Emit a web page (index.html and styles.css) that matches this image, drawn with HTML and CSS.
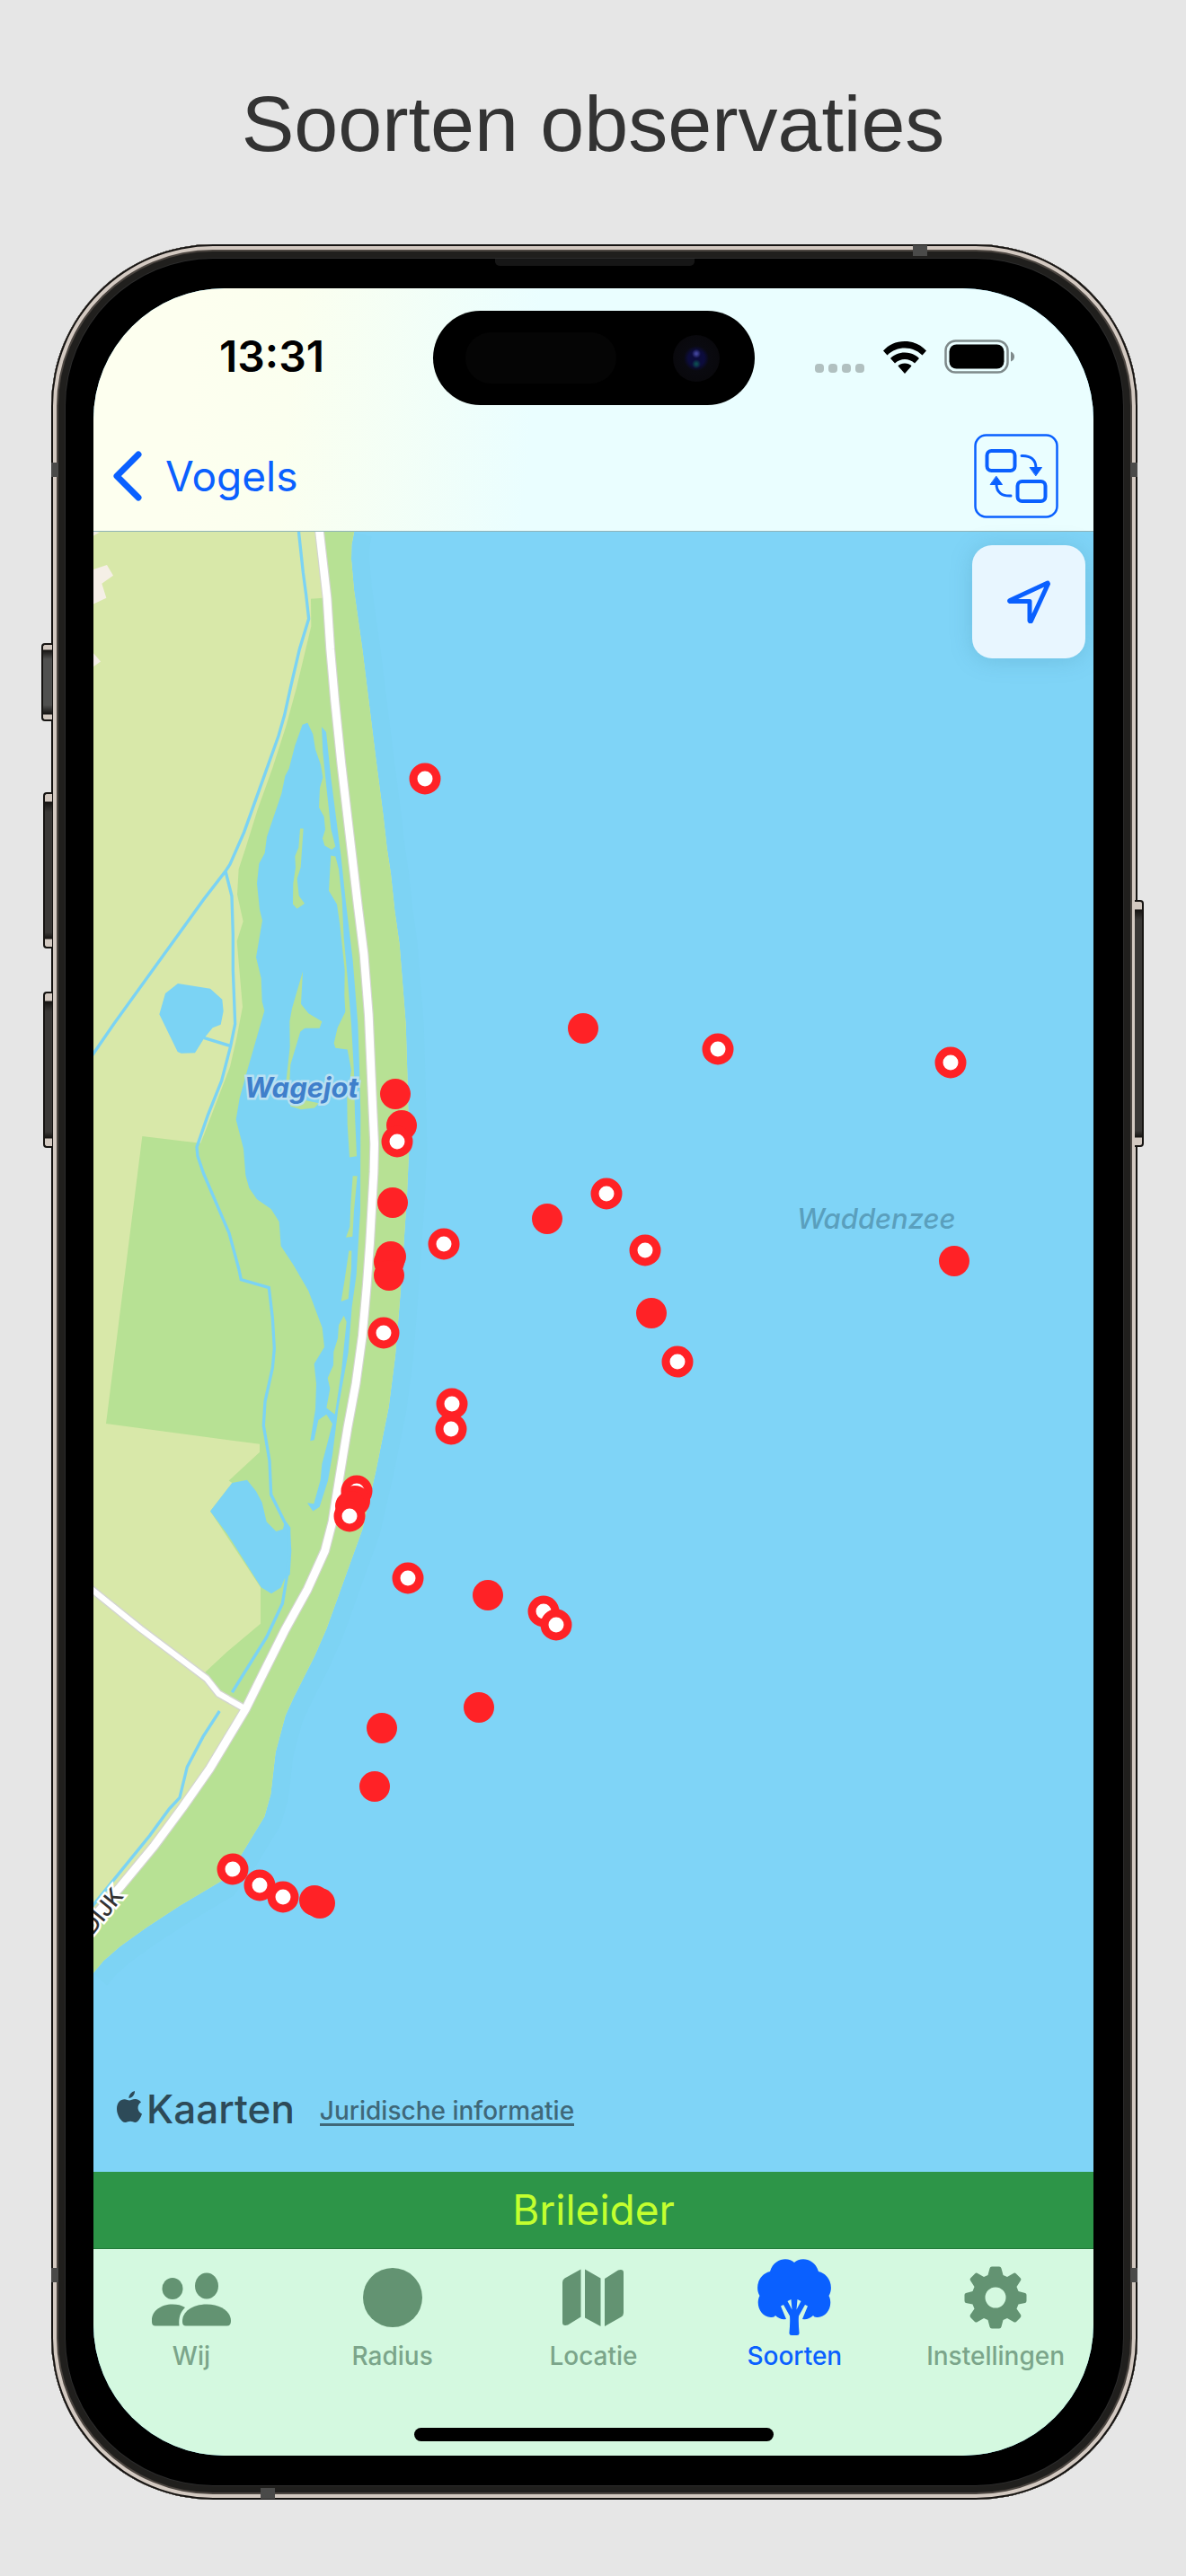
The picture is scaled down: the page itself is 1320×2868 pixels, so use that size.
FILE: index.html
```html
<!DOCTYPE html>
<html lang="nl">
<head>
<meta charset="utf-8">
<meta name="viewport" content="width=device-width, initial-scale=1">
<title>Soorten observaties</title>
<link rel="stylesheet" href="styles.css">
</head>
<body>
<h1 class="title">Soorten observaties</h1>
<main class="stage">
  <div class="phone">
    <span class="key key-action"></span>
    <span class="key key-up"></span>
    <span class="key key-down"></span>
    <span class="key key-power"></span>
    <span class="band band-left-top"></span>
    <span class="band band-left-bottom"></span>
    <span class="band band-right-top"></span>
    <span class="band band-right-bottom"></span>
    <span class="band band-top"></span>
    <span class="band band-bottom"></span>
    <span class="earpiece"></span>
    <div class="screen">
      <div class="island"><span class="sensor"></span><span class="camera"></span></div>
      <header class="header">
        <div class="status">
          <time class="clock">13:31</time>
          <div class="indicators">
            <svg class="dots" viewBox="0 0 56 12" aria-hidden="true"><rect width="10" height="10" y="1" rx="4"/><rect width="10" height="10" x="15" y="1" rx="4"/><rect width="10" height="10" x="30" y="1" rx="4"/><rect width="10" height="10" x="45" y="1" rx="4"/></svg>
            <svg class="wifi" viewBox="0 0 48 36" aria-hidden="true"><path d="M24 0C34 0 42 4 48 10.500L43.500 15.500C38 10 31 7.500 24 7.500S10 10 4.500 15.500L0 10.500C6 4 14 0 24 0Z"/><path d="M24 12.500C30.500 12.500 36 15 40 19L35 24.500C32 21.500 28 20 24 20S16 21.500 13 24.500L8 19C12 15 17.500 12.500 24 12.500Z"/><path d="M24 24.500C27 24.500 30 25.700 31.500 27.500L24 36L16.500 27.500C18 25.700 21 24.500 24 24.500Z"/></svg>
            <svg class="battery" viewBox="0 0 79 38" aria-hidden="true"><rect x="1.500" y="1.500" width="69" height="35" rx="11" fill="none" stroke="#7f8a8b" stroke-width="2.500"/><rect x="5.500" y="5.500" width="61" height="27" rx="8"/><path d="M74 13.500Q78 15 78 19T74 24.500Z" fill="#7f8a8b"/></svg>
          </div>
        </div>
        <nav class="navbar" aria-label="Navigatie">
          <a class="back" href="#vogels">
            <svg class="chevron" viewBox="0 0 32 56" aria-hidden="true"><path d="M28 4L4 28L28 52"/></svg>
            Vogels
          </a>
          <button class="swap" type="button" aria-label="Wissel weergave">
            <svg viewBox="0 0 94 94" aria-hidden="true"><rect x="1.500" y="1.500" width="91" height="91" rx="12" stroke-width="2.500"/><rect x="14.500" y="19" width="31" height="22" rx="5"/><rect x="48.500" y="53" width="31" height="22" rx="5"/><path d="M53 24.500C63 24 69 29 69 38" stroke-width="3"/><path d="M41 69C31 69.500 25 65 25 56" stroke-width="3"/><path class="solid" d="M62.500 37.500H75.500L69 46.500ZM18.500 56.500H31.500L25 47.500Z" stroke-width="1"/></svg>
          </button>
        </nav>
      </header>
      <section class="map" aria-label="Kaart">
        <svg class="chart" viewBox="104 592 1113 1826" role="img" aria-label="Waarnemingen bij Wagejot en de Waddenzee">
          <rect class="sea" x="104" y="592" width="1113" height="1826"/>
          <g transform="translate(90 580) scale(.33333 .35714)">
            <path class="shallow" d="M912 36L904 75L903 120L912 215L940 400L985 740L1010 920L1022 1020L1035 1100L1048 1215L1064 1320L1085 1568L1090 1720L1096 1950L1089 2100L1075 2300L1066 2420L1050 2602L1028 2762L985 2962L940 3144L905 3234L820 3454L780 3539L710 3669L683 3724L650 3839L634 3969L613 4039L535 4159L470 4239L330 4317L220 4384L130 4444L75 4489L42 4526"/>
            <path class="field" d="M0 0H920L904 75L903 120L912 215L940 400L985 740L1010 920L1022 1020L1035 1100L1048 1215L1064 1320L1085 1568L1090 1720L1096 1950L1089 2100L1075 2300L1066 2420L1050 2602L1028 2762L985 2962L940 3144L905 3234L820 3454L780 3539L710 3669L683 3724L650 3839L634 3969L613 4039L535 4159L470 4239L330 4317L220 4384L130 4444L75 4489L42 4526L0 4550Z"/>
            <path class="meadow" d="M800 30H913L904 75L903 120L912 215L940 400L985 740L1010 920L1022 1020L1035 1100L1048 1215L1064 1320L1085 1568L1090 1720L1096 1950L1089 2100L1075 2300L1066 2420L1050 2602L1028 2762L985 2962L940 3144L905 3234L820 3454L780 3539L710 3669L683 3724L650 3839L634 3969L613 4039L535 4159L470 4239L330 4317L220 4384L130 4444L75 4489L42 4526L0 4550V4400L130 4260L245 4130L340 4010L430 3890L550 3704L460 3656L415 3589L490 3524L600 3438V3324L432 3087L505 2999L494 2992L597 2903V2878L84 2814L205 1918L400 1940L498 1702L520 1612L540 1515L532 1430L521 1310L542 1248L522 1165L527 1085L550 1020L590 900L640 770L685 640L720 520L769 328L768 243L808 240Z"/>
            <path class="built" d="M30 155L87 137L108 170L70 195L85 240L30 264ZM30 400L42 412L66 438L42 454L30 460ZM30 30L62 36L42 46Z"/>
            <path class="lake" d="M324 1442L432 1458L472 1492L476 1528L467 1570L440 1580L412 1612L381 1658L335 1660L323 1655L262 1538L282 1473Z"/>
            <path class="lake" d="M757 629L775 665L783 712L801 760L808 800L798 832L795 893L812 922L816 962L807 990L814 1012L838 1025L850 1015L835 960L820 830L808 720L804 642L819 658L835 800L868 1040L885 1190L908 1370L925 1568L930 1700L934 1850L933 2150L920 2350L905 2450L893 2592L860 2762L840 2912L825 2992L797 3074L775 3087L756 3061L778 3064L800 2990L805 2940L840 2815L820 2785L793 2803L779 2865L766 2868L783 2770L786 2690L779 2628L813 2575L806 2515L760 2400L710 2320L668 2260L662 2185L635 2145L588 2115L562 2080L550 2040L543 1957L518 1866L530 1800L555 1715L613 1527L605 1498L602 1425L585 1360L606 1245L597 1212L588 1130L595 1068L614 1035L621 985L670 850L682 795L695 772L715 700L740 635Z"/>
            <path class="lake" d="M505 2999L555 2990L585 3025L605 3060L620 3120L652 3150L675 3143L680 3120L698 3140L703 3210L698 3285L680 3298L668 3325L636 3344L602 3324L490 3160L432 3087Z"/>
            <path class="meadow" d="M732 959H743L734 1080L722 1115L728 1168L747 1193L722 1209L708 1195L709 1130L717 1080L715 1045L727 1018ZM835 1043L850 1046L861 1085L872 1180L878 1300L890 1420L903 1568L912 1720L915 1850L921 1980L897 1984L890 1880L889 1800L903 1712L890 1648L850 1643L845 1628L857 1580L883 1530L880 1480L881 1400L865 1260L855 1195L828 1153L832 1085ZM741 1404L735 1506L760 1535L805 1560L797 1581H748L733 1592L700 1695L695 1780L700 1815L745 1805L795 1815L780 1830L735 1835L700 1825L685 1750L698 1640L697 1560L705 1520ZM908 2042H923L912 2150L907 2231L885 2234L898 2200L901 2130ZM895 2275H904L903 2330L893 2425L869 2433L880 2370ZM878 2477L887 2497L870 2650L853 2755L848 2785L820 2765L832 2705L824 2672L843 2632L844 2590L858 2548L861 2507Z"/>
            <path class="creek" d="M727 30L742 160L752 230L761 305L730 400L700 520L680 605L660 670L595 840L545 970L498 1070L483 1092L410 1180L110 1568L30 1677M483 1092L504 1170L508 1290L508 1400L515 1568L500 1637L470 1745L425 1850L387 1952L390 1980L410 2035L495 2220L527 2330L535 2365L628 2390L640 2485L646 2580L640 2640L615 2745L610 2820L630 2930L635 3035L680 3120L695 3140V3215L688 3290L673 3375L620 3480L505 3652M463 3710L408 3790L355 3884L330 3980L295 4015L230 4098L30 4328M410 1611L500 1637"/>
            <path class="lane-edge" d="M30 3326L200 3454L420 3609L460 3656L550 3704"/>
            <path class="road-edge" d="M795 20L822 240L833 400L848 560L870 760L900 1000L925 1200L945 1350L961 1540L975 1842L980 1942L978 2030L965 2250L955 2380L940 2540L918 2690L890 2830L862 2990L850 3060L840 3120L815 3210L757 3330L680 3460L605 3600L550 3704L430 3890L340 4010L245 4130L130 4260L30 4365"/>
            <path class="lane" d="M30 3326L200 3454L420 3609L460 3656L550 3704"/>
            <path class="road" d="M795 20L822 240L833 400L848 560L870 760L900 1000L925 1200L945 1350L961 1540L975 1842L980 1942L978 2030L965 2250L955 2380L940 2540L918 2690L890 2830L862 2990L850 3060L840 3120L815 3210L757 3330L680 3460L605 3600L550 3704L430 3890L340 4010L245 4130L130 4260L30 4365"/>
          </g>
          <text class="place" x="272" y="1222">Wagejot</text>
          <text class="water-name" x="887" y="1368">Waddenzee</text>
          <text class="street" transform="translate(103 2155) rotate(-51)">DIJK</text>
          <g class="dot">
            <circle cx="649" cy="1145" r="17"/><circle cx="440" cy="1218" r="17"/><circle cx="447" cy="1253" r="17"/><circle cx="437" cy="1339" r="17"/><circle cx="435" cy="1399" r="17"/><circle cx="433" cy="1405" r="17"/><circle cx="433" cy="1420" r="17"/><circle cx="609" cy="1357" r="17"/><circle cx="1062" cy="1404" r="17"/><circle cx="725" cy="1462" r="17"/><circle cx="543" cy="1776" r="17"/><circle cx="533" cy="1901" r="17"/><circle cx="425" cy="1924" r="17"/><circle cx="417" cy="1989" r="17"/><circle cx="350" cy="2116" r="17"/><circle cx="356" cy="2119" r="17"/>
          </g>
          <g class="ring">
            <circle cx="473" cy="867" r="13"/><circle cx="799" cy="1168" r="13"/><circle cx="1058" cy="1183" r="13"/><circle cx="442" cy="1271" r="13"/><circle cx="675" cy="1329" r="13"/><circle cx="494" cy="1385" r="13"/><circle cx="718" cy="1392" r="13"/><circle cx="427" cy="1484" r="13"/><circle cx="754" cy="1516" r="13"/><circle cx="503" cy="1563" r="13"/><circle cx="502" cy="1591" r="13"/><circle cx="397" cy="1660" r="13"/><circle cx="454" cy="1757" r="13"/><circle cx="605" cy="1794" r="13"/><circle cx="619" cy="1809" r="13"/><circle cx="259" cy="2081" r="13"/><circle cx="289" cy="2099" r="13"/><circle cx="315" cy="2112" r="13"/>
          </g>
          <g class="dot"><circle cx="395" cy="1671" r="17"/><circle cx="390" cy="1677" r="17"/></g>
          <g class="ring"><circle cx="389" cy="1688" r="13"/></g>
        </svg>
        <button class="locate" type="button" aria-label="Mijn locatie">
          <svg viewBox="0 0 48 48" aria-hidden="true"><path d="M45 3L3 22.500Q2 23 3 23.500H25V45Q25.500 46.500 26.500 45.500L45.500 4Z"/></svg>
        </button>
        <div class="credits">
          <span class="brand">
            <svg viewBox="0 0 28 36" aria-hidden="true"><path d="M20 0C20.300 4 17 8 13.500 8C13 4.500 16.500 .800 20 0ZM14 10.500C15.500 10.500 17.500 9 20.500 9C23 9 25.500 10.500 27 12.500C22 15.500 22.500 23 28 25.500C26.500 30 23.500 35 20.500 35C18.500 35 17.500 33.800 15 33.800S11.500 35 9.500 35C5 35 0 27 0 20C0 13 4 9.200 8.500 9.200C11 9.200 12.800 10.500 14 10.500Z"/></svg>
            Kaarten
          </span>
          <a class="legal" href="#juridisch">Juridische informatie</a>
        </div>
      </section>
      <h2 class="species">Brileider</h2>
      <footer class="footer">
        <nav class="tabs" aria-label="Tabbladen">
          <a class="tab" href="#wij">
            <svg viewBox="0 0 88 88" aria-hidden="true"><ellipse cx="23" cy="35" rx="11.500" ry="12"/><ellipse cx="61" cy="32" rx="13" ry="14.500"/><path d="M0 70C0 60 10 52.500 23 52.500C28.500 52.500 33 53.500 37 56C32 61 29.500 67 30.500 76.500H4Q0 76.500 0 72Z"/><path d="M34 71C34 61 45 52.500 61 52.500S88 61 88 71Q88 76.500 83.500 76.500H38Q34 76.500 34 72Z"/></svg>
            Wij
          </a>
          <a class="tab" href="#radius">
            <svg viewBox="0 0 88 88" aria-hidden="true"><circle cx="44" cy="45" r="33"/></svg>
            Radius
          </a>
          <a class="tab" href="#locatie">
            <svg viewBox="0 0 88 88" aria-hidden="true"><path d="M10 28Q10 25 12.500 23.500L30.500 13.500V66.500L16 75.500Q10 77 10 73ZM35 13.500L52.500 23.500V77L35 67.500ZM57 24L72 14.500Q78 13 78 17V62Q78 65 75.500 66.500L57 77Z"/></svg>
            Locatie
          </a>
          <a class="tab active" href="#soorten" aria-current="page">
            <svg viewBox="0 0 88 88" aria-hidden="true"><path d="M44 6C50 0 66 0 71 16C84 19 88 34 82.500 43C88 54 80 68 69 67Q66 67 65 65Q60 70 53 69L59 54.500L56 53L49 65.500C48.500 72 49 78 49.500 84Q50 87 47 87H41Q38 87 38.500 84C39 78 39.500 72 39 65.500L32 53L29 54.500L35 69Q28 70 23 65Q22 67 19 67C8 68 0 54 5.500 43C0 34 4 19 17 16C22 0 38 0 44 6Z"/><path class="gap" d="M36.500 49L40.500 47L41.500 58.500ZM51.500 49L47.500 47L46.500 58.500Z"/></svg>
            Soorten
          </a>
          <a class="tab" href="#instellingen">
            <svg viewBox="0 0 88 88" aria-hidden="true"><path fill-rule="evenodd" d="M40 10.500H48Q50 10.500 50.500 12.500L52.500 20L57 22L64 18Q65.500 17 67 18.500L71.500 23Q73 24.500 72 26L67.500 33L69.500 38L77 40Q78.500 40.500 78.500 42V48.500Q78.500 50.500 77 51L69.500 52.500L67.500 57.500L72 64Q73 66 71.500 67.500L67 72Q65.500 73 64 72L57 68L52.500 70L50.500 77.500Q50 79.500 48 79.500H40Q38 79.500 37.500 77.500L35.500 70L31 68L24 72Q22.500 73 21 72L16.500 67.500Q15 66 16 64L20.500 57.500L18.500 52.500L11 51Q9.500 50.500 9.500 48.500V42Q9.500 40.500 11 40L18.500 38L20.500 33L16 26Q15 24.500 16.500 23L21 18.500Q22.500 17 24 18L31 22L35.500 20L37.500 12.500Q38 10.500 40 10.500ZM44 33.500A11.500 11.500 0 1 0 44 56.500A11.500 11.500 0 1 0 44 33.500Z"/></svg>
            Instellingen
          </a>
        </nav>
        <span class="home"></span>
      </footer>
    </div>
  </div>
</main>
</body>
</html>
```
FILE: styles.css
```css
* {
  box-sizing: border-box;
}

body {
  margin: 0;
  background: #e6e6e6;
  color: #000;
  font-family: Inter, "Liberation Sans", sans-serif;
}

a {
  color: inherit;
  text-decoration: none;
}

button {
  padding: 0;
  border: 0;
  background: none;
}

svg {
  display: block;
}

.title {
  margin: 0;
  padding: 86px 24px 82px;
  color: #333;
  font: 400 88px/104px "Liberation Sans", Arial, sans-serif;
  text-align: center;
}

.stage {
  padding: 0 54px 85px 57px;
}

/* Phone body */
.phone {
  position: relative;
  padding: 49px 49px 49px 47px;
  border-radius: 180px;
  background: #000;
  box-shadow:
    inset 0 0 0 2px #161412,
    inset 0 0 0 6px #d3c9c1,
    inset 0 0 0 8px #4b4540,
    inset 0 0 0 15px #201f1d,
    inset 0 0 0 16px #2b2b2b;
}

.key {
  position: absolute;
  left: -9px;
  width: 10px;
  height: 174px;
  border: 2px solid #161412;
  border-right: 0;
  border-radius: 4px 0 0 4px;
  background: linear-gradient(#d3c9c1 8px, #161412 9px, #3a3836 20px, #3a3836 154px, #161412 161px, #d3c9c1 162px);
}

.key-action {
  top: 444px;
  left: -11px;
  width: 12px;
  height: 87px;
  background: linear-gradient(#d3c9c1 5px, #161412 6px, #50504f 16px, #50504f 67px, #161412 77px, #d3c9c1 78px);
}

.key-up {
  top: 610px;
}

.key-down {
  top: 832px;
}

.key-power {
  top: 730px;
  right: -7px;
  left: auto;
  height: 275px;
  border: 2px solid #161412;
  border-left: 0;
  border-radius: 0 4px 4px 0;
  background: linear-gradient(#d3c9c1 8px, #161412 9px, #3a3836 20px, #3a3836 255px, #161412 262px, #d3c9c1 263px);
}

.band {
  position: absolute;
  width: 8px;
  height: 16px;
  background: #4a4a49;
}

.band-left-top {
  top: 243px;
  left: 0;
}

.band-left-bottom {
  bottom: 242px;
  left: 0;
}

.band-right-top {
  top: 243px;
  right: 0;
}

.band-right-bottom {
  right: 0;
  bottom: 242px;
}

.band-top {
  top: 1px;
  right: 234px;
  width: 16px;
  height: 12px;
}

.band-bottom {
  bottom: 1px;
  left: 233px;
  width: 16px;
  height: 12px;
}

.earpiece {
  position: absolute;
  top: 16px;
  left: 50%;
  width: 222px;
  height: 8px;
  border-radius: 0 0 5px 5px;
  background: #161616;
  transform: translateX(-50%);
}

.screen {
  position: relative;
  overflow: hidden;
  border-radius: 146px;
  background: #7fd4f7;
}

.island {
  position: absolute;
  top: 25px;
  left: 50%;
  z-index: 1;
  display: flex;
  align-items: center;
  justify-content: space-between;
  width: 358px;
  height: 105px;
  padding: 0 39px 0 36px;
  border-radius: 53px;
  background: #000;
  transform: translateX(-50%);
}

.sensor {
  width: 168px;
  height: 57px;
  border-radius: 29px;
  background: #050505;
}

.camera {
  width: 52px;
  height: 52px;
  border-radius: 50%;
  background: radial-gradient(circle at 50% 40%, #41439a 0 1px, transparent 5px), radial-gradient(circle at 50% 62%, #0d4a50 0 1px, transparent 5px), radial-gradient(circle, #0c0c3c 0 9px, #0a0a10 14px, #080709 100%);
}

/* Header */
.header {
  border-bottom: 1px solid #8fb3b8;
  background: linear-gradient(95deg, #fdffef 10%, #fbffef 20%, #eafeff 44%);
}

.status {
  display: flex;
  align-items: center;
  justify-content: space-between;
  height: 152px;
  padding: 0 87px 0 140px;
}

.clock {
  font-size: 48px;
  font-weight: 600;
  line-height: 56px;
}

.indicators {
  display: flex;
  align-items: flex-end;
  gap: 20px;
}

.dots {
  width: 56px;
  height: 12px;
  fill: #b1c0c0;
}

.wifi {
  width: 48px;
  height: 36px;
}

.battery {
  width: 79px;
  height: 38px;
}

.navbar {
  display: flex;
  align-items: center;
  justify-content: space-between;
  height: 118px;
  padding: 0 39px 4px 22px;
  color: #0a60ff;
}

.back {
  display: flex;
  align-items: center;
  gap: 26px;
  font-size: 46px;
  line-height: 56px;
}

.chevron {
  width: 32px;
  height: 56px;
  fill: none;
  stroke: currentColor;
  stroke-width: 7;
  stroke-linecap: round;
  stroke-linejoin: round;
}

.swap svg {
  width: 94px;
  height: 94px;
  fill: none;
  stroke: #0a60ff;
  stroke-width: 4;
  stroke-linecap: round;
  stroke-linejoin: round;
}

.swap .solid {
  fill: #0a60ff;
}

/* Map */
.map {
  position: relative;
}

.chart {
  width: 100%;
  height: auto;
}

.sea {
  fill: #7fd4f7;
}

.shallow {
  fill: none;
  stroke: #7dd3f4;
  stroke-width: 120;
}

.field {
  fill: #d8e8a9;
}

.meadow {
  fill: #b7e194;
}

.built {
  fill: #f5efe6;
}

.lake {
  fill: #7bd3f4;
}

.creek {
  fill: none;
  stroke: #7bd3f4;
  stroke-width: 10;
}

.road,
.road-edge,
.lane,
.lane-edge {
  fill: none;
  stroke: #fff;
  stroke-width: 26;
  stroke-linejoin: round;
}

.lane {
  stroke-width: 18;
}

.road-edge {
  stroke: #d3d5d0;
  stroke-width: 33;
}

.lane-edge {
  stroke: #d3d5d0;
  stroke-width: 26;
}

.place,
.water-name,
.street {
  font-size: 31px;
  font-style: italic;
  font-weight: 700;
  paint-order: stroke;
}

.place {
  fill: #3f7fcb;
  stroke: #b9e0f2;
  stroke-width: 5;
}

.water-name {
  fill: #5a9fbd;
  font-weight: 500;
}

.street {
  fill: #333;
  stroke: #fff;
  stroke-width: 5;
  font-size: 25px;
  font-style: normal;
  font-weight: 500;
}

.dot {
  fill: #ff2226;
}

.ring {
  fill: #fff;
  stroke: #ff2226;
  stroke-width: 9;
}

.locate {
  position: absolute;
  top: 15px;
  right: 9px;
  display: grid;
  place-items: center;
  width: 126px;
  height: 126px;
  border-radius: 22px;
  background: #e8f6ff;
  box-shadow: 0 2px 24px rgb(60 130 160 / 25%);
}

.locate svg {
  width: 48px;
  height: 48px;
  fill: none;
  stroke: #0a60ff;
  stroke-width: 5;
  stroke-linejoin: round;
}

.credits {
  position: absolute;
  bottom: 42px;
  left: 26px;
  display: flex;
  align-items: center;
  gap: 28px;
}

.brand {
  display: flex;
  align-items: center;
  gap: 5px;
  color: #2d4a58;
  font-size: 44px;
  font-weight: 500;
  line-height: 56px;
}

.brand svg {
  width: 28px;
  height: 36px;
  margin-bottom: 4px;
  fill: currentColor;
}

.legal {
  padding-top: 6px;
  border-bottom: 3px solid currentColor;
  color: #3f6879;
  font-size: 28px;
  font-weight: 500;
  line-height: 28px;
}

.species {
  margin: 0;
  padding: 14px 24px 15px;
  border-bottom: 1px solid #237a3a;
  background: #2d9548;
  color: #c3ff2f;
  font-size: 46px;
  font-weight: 400;
  line-height: 56px;
  text-align: center;
}

/* Tab bar */
.footer {
  display: flex;
  flex-direction: column;
  align-items: center;
  padding: 9px 0 16px;
  background: #d4f9e0;
}

.tabs {
  display: grid;
  grid-template-columns: repeat(5, 1fr);
  width: calc(100% + 6px);
}

.tab {
  display: flex;
  flex-direction: column;
  gap: 4px;
  align-items: center;
  color: #7ba58a;
  font-size: 28px;
  font-weight: 500;
  line-height: 36px;
}

.tab svg {
  width: 88px;
  height: 88px;
  fill: #639372;
}

.active {
  color: #0a60ff;
}

.active svg {
  fill: currentColor;
}

.active .gap {
  fill: #d4f9e0;
}

.home {
  width: 400px;
  height: 15px;
  margin-top: 62px;
  border-radius: 8px;
  background: #000;
}
```
